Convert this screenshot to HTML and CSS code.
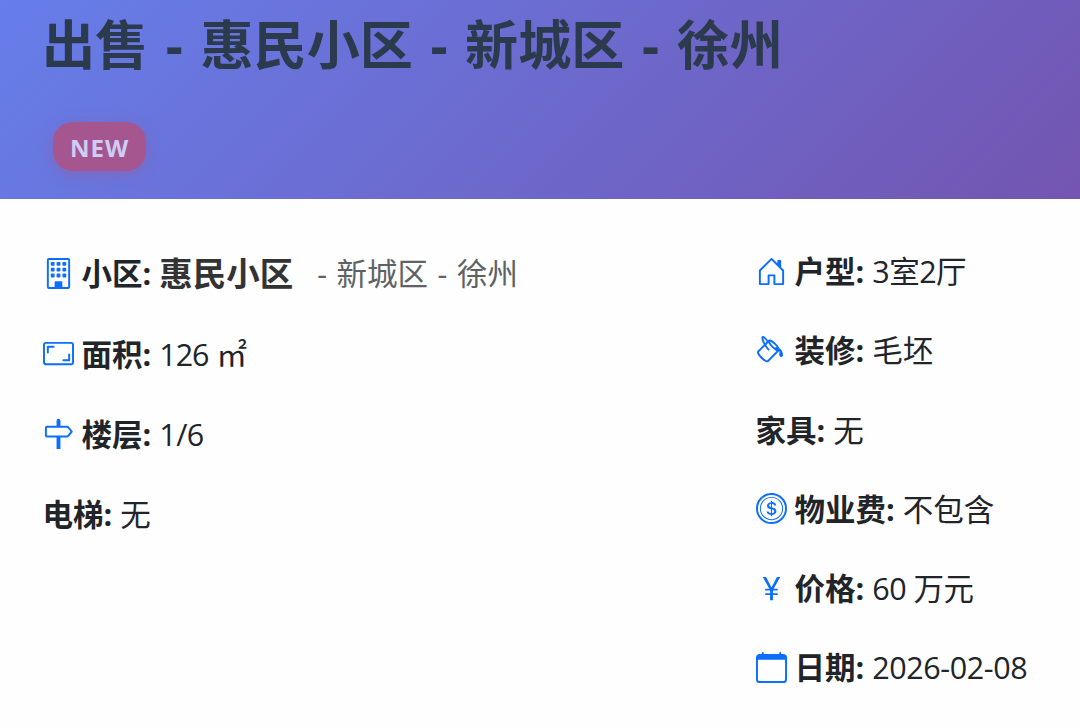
FILE: index.html
```
<!DOCTYPE html>
<html lang="zh-CN">
<head>
    <meta charset="UTF-8">
    <title>出售 - 惠民小区 - 新城区 - 徐州</title>
    <link rel="stylesheet" href="styles.css">
</head>
<body>
    <div class="card-header">
        <h1 class="title">出售 - 惠民小区 - 新城区 - 徐州</h1>
        <span class="badge-new">NEW</span>
    </div>

    <div class="card-body">
        <div class="col col-left">
            <p class="item">
                <svg class="icon" viewBox="0 0 16 16"><path d="M4 2.5a.5.5 0 0 1 .5-.5h1a.5.5 0 0 1 .5.5v1a.5.5 0 0 1-.5.5h-1a.5.5 0 0 1-.5-.5zm3 0a.5.5 0 0 1 .5-.5h1a.5.5 0 0 1 .5.5v1a.5.5 0 0 1-.5.5h-1a.5.5 0 0 1-.5-.5zm3 0a.5.5 0 0 1 .5-.5h1a.5.5 0 0 1 .5.5v1a.5.5 0 0 1-.5.5h-1a.5.5 0 0 1-.5-.5zm-6 3a.5.5 0 0 1 .5-.5h1a.5.5 0 0 1 .5.5v1a.5.5 0 0 1-.5.5h-1a.5.5 0 0 1-.5-.5zm3 0a.5.5 0 0 1 .5-.5h1a.5.5 0 0 1 .5.5v1a.5.5 0 0 1-.5.5h-1a.5.5 0 0 1-.5-.5zm3 0a.5.5 0 0 1 .5-.5h1a.5.5 0 0 1 .5.5v1a.5.5 0 0 1-.5.5h-1a.5.5 0 0 1-.5-.5zm-6 3a.5.5 0 0 1 .5-.5h1a.5.5 0 0 1 .5.5v1a.5.5 0 0 1-.5.5h-1a.5.5 0 0 1-.5-.5zm3 0a.5.5 0 0 1 .5-.5h1a.5.5 0 0 1 .5.5v1a.5.5 0 0 1-.5.5h-1a.5.5 0 0 1-.5-.5zm3 0a.5.5 0 0 1 .5-.5h1a.5.5 0 0 1 .5.5v1a.5.5 0 0 1-.5.5h-1a.5.5 0 0 1-.5-.5z"/><path d="M2 1a1 1 0 0 1 1-1h10a1 1 0 0 1 1 1v14a1 1 0 0 1-1 1H3a1 1 0 0 1-1-1zm11 0H3v14h3v-2.5a.5.5 0 0 1 .5-.5h3a.5.5 0 0 1 .5.5V15h3z"/></svg>
                <strong>小区:</strong>
                <span class="community">惠民小区</span>
                <span class="muted">- 新城区 - 徐州</span>
            </p>
            <p class="item">
                <svg class="icon" viewBox="0 0 16 16"><path d="M0 3.5A1.5 1.5 0 0 1 1.5 2h13A1.5 1.5 0 0 1 16 3.5v9a1.5 1.5 0 0 1-1.5 1.5h-13A1.5 1.5 0 0 1 0 12.5zM1.5 3a.5.5 0 0 0-.5.5v9a.5.5 0 0 0 .5.5h13a.5.5 0 0 0 .5-.5v-9a.5.5 0 0 0-.5-.5z"/><path d="M2 4.5a.5.5 0 0 1 .5-.5h3a.5.5 0 0 1 0 1H3v2.5a.5.5 0 0 1-1 0zm12 7a.5.5 0 0 1-.5.5h-3a.5.5 0 0 1 0-1H13V8.5a.5.5 0 0 1 1 0z"/></svg>
                <strong>面积:</strong>
                <span class="area">126 ㎡</span>
            </p>
            <p class="item">
                <svg class="icon" viewBox="0 0 16 16"><path d="M7 1.414V4H2a1 1 0 0 0-1 1v4a1 1 0 0 0 1 1h5v6h2v-6h3.532a1 1 0 0 0 .768-.36l1.933-2.32a.5.5 0 0 0 0-.64L13.3 4.36a1 1 0 0 0-.768-.36H9V1.414a1 1 0 0 0-2 0M12.532 5l1.666 2-1.666 2H2V5z"/></svg>
                <strong>楼层:</strong>
                <span class="floor">1/6</span>
            </p>
            <p class="item">
                <strong>电梯:</strong>
                <span>无</span>
            </p>
        </div>

        <div class="col col-right">
            <p class="item">
                <svg class="icon" viewBox="0 0 16 16"><path d="M8.354 1.146a.5.5 0 0 0-.708 0l-6 6A.5.5 0 0 0 1.5 7.5v7a.5.5 0 0 0 .5.5h4.5a.5.5 0 0 0 .5-.5v-4h2v4a.5.5 0 0 0 .5.5H14a.5.5 0 0 0 .5-.5v-7a.5.5 0 0 0-.146-.354L13 5.793V2.5a.5.5 0 0 0-.5-.5h-1a.5.5 0 0 0-.5.5v1.293zM2.5 14V7.707l5.5-5.5 5.5 5.5V14H10v-4a.5.5 0 0 0-.5-.5h-3a.5.5 0 0 0-.5.5v4z"/></svg>
                <strong>户型:</strong>
                <span class="rooms">3室2厅</span>
            </p>
            <p class="item">
                <svg class="icon" viewBox="0 0 16 16"><path d="M6.192 2.78c-.458-.677-.927-1.248-1.35-1.643a3 3 0 0 0-.71-.515c-.217-.104-.56-.205-.882-.02-.367.213-.427.63-.43.896-.003.304.064.664.173 1.044.196.687.556 1.528 1.035 2.402L.752 8.22c-.277.277-.269.656-.218.918.055.283.187.593.36.903.348.627.92 1.361 1.626 2.068.707.707 1.441 1.278 2.068 1.626.31.173.62.305.903.36.262.05.64.059.918-.218l5.615-5.615c.118.257.092.512.05.939-.03.292-.068.665-.073 1.176v.123h.003a1 1 0 0 0 1.993 0H14v-.057a1 1 0 0 0-.004-.117c-.055-1.25-.7-2.738-1.86-3.494a4 4 0 0 0-.211-.434c-.349-.626-.92-1.36-1.627-2.067S8.857 3.052 8.23 2.704c-.31-.172-.62-.304-.903-.36-.262-.05-.64-.058-.918.219zM4.16 1.867c.381.356.844.922 1.311 1.632l-.704.705c-.382-.727-.66-1.402-.813-1.938a3.3 3.3 0 0 1-.131-.673q.137.09.337.274m.394 3.965c.54.852 1.107 1.567 1.607 2.033a.5.5 0 1 0 .682-.732c-.453-.422-1.017-1.136-1.564-2.027l1.088-1.088q.081.181.183.365c.349.627.92 1.361 1.627 2.068.706.707 1.44 1.278 2.068 1.626q.183.103.365.183l-4.861 4.862-.068-.01c-.137-.027-.342-.104-.608-.252-.524-.292-1.186-.8-1.846-1.46s-1.168-1.32-1.46-1.846c-.147-.265-.225-.47-.251-.607l-.01-.068zm2.87-1.935a2.4 2.4 0 0 1-.241-.561c.135.033.324.11.562.241.524.292 1.186.8 1.846 1.46.45.45.83.901 1.118 1.31a3.5 3.5 0 0 0-1.066.091 11 11 0 0 1-.76-.694c-.66-.66-1.167-1.322-1.458-1.847z"/></svg>
                <strong>装修:</strong>
                <span>毛坯</span>
            </p>
            <p class="item">
                <strong>家具:</strong>
                <span>无</span>
            </p>
            <p class="item">
                <svg class="icon" viewBox="0 0 16 16"><path d="M5.5 9.511c.076.954.83 1.697 2.182 1.785V12h.6v-.709c1.4-.098 2.218-.846 2.218-1.932 0-.987-.626-1.496-1.745-1.76l-.473-.112V5.57c.6.068.982.396 1.074.85h1.052c-.076-.919-.864-1.638-2.126-1.716V4h-.6v.719c-1.195.117-2.01.836-2.01 1.853 0 .9.606 1.472 1.613 1.707l.397.098v2.034c-.615-.093-1.022-.43-1.114-.9zm2.177-2.166c-.59-.137-.91-.416-.91-.836 0-.47.345-.822.915-.925v1.76h-.005zm.692 1.193c.717.166 1.048.435 1.048.91 0 .542-.412.914-1.135.982V8.518z"/><path d="M8 15A7 7 0 1 1 8 1a7 7 0 0 1 0 14m0 1A8 8 0 1 0 8 0a8 8 0 0 0 0 16"/><path d="M8 13.5a5.5 5.5 0 1 1 0-11 5.5 5.5 0 0 1 0 11m0 .5A6 6 0 1 0 8 2a6 6 0 0 0 0 12"/></svg>
                <strong>物业费:</strong>
                <span>不包含</span>
            </p>
            <p class="item">
                <svg class="icon" viewBox="0 0 16 16"><path d="M8.75 14v-2.629h2.446v-.967H8.75v-1.31h2.445v-.967H9.128L12.5 2h-1.699L8.047 7.327h-.086L5.207 2H3.5l3.363 6.127H4.778v.968H7.25v1.31H4.78v.966h2.47V14z"/></svg>
                <strong>价格:</strong>
                <span class="price">60 万元</span>
            </p>
            <p class="item">
                <svg class="icon" viewBox="0 0 16 16"><path d="M3.5 0a.5.5 0 0 1 .5.5V1h8V.5a.5.5 0 0 1 1 0V1h1a2 2 0 0 1 2 2v11a2 2 0 0 1-2 2H2a2 2 0 0 1-2-2V3a2 2 0 0 1 2-2h1V.5a.5.5 0 0 1 .5-.5M1 4v10a1 1 0 0 0 1 1h12a1 1 0 0 0 1-1V4z"/></svg>
                <strong>日期:</strong>
                <span class="date">2026-02-08</span>
            </p>
        </div>
    </div>
</body>
</html>
```
FILE: styles.css
```
* {
    box-sizing: border-box;
}
body {
    margin: 0;
    height: 728px;
    overflow: hidden;
    background: #fefefe;
    color: #212529;
    font-family: "Open Sans", "Noto Sans CJK SC", sans-serif;
    font-size: 30.5px;
}
.card-header {
    height: 199px;
    padding: 13px 43px 0 42px;
    background: linear-gradient(135deg, #667eea 0%, #764ba2 125%);
}
.title {
    margin: 0 0 45px;
    font-size: 53.1px;
    line-height: 64px;
    font-weight: 700;
    word-spacing: 3.8px;
    white-space: nowrap;
    color: #2c3a4d;
}
.badge-new {
    display: block;
    width: 93px;
    height: 49px;
    margin-left: 11px;
    border-radius: 20px;
    background: #a5568f;
    box-shadow: 0 3px 14px rgba(165, 86, 143, 0.45);
    color: #cdcdf5;
    font-size: 24px;
    font-weight: 700;
    line-height: 52px;
    letter-spacing: 1px;
    text-align: center;
}
.card-body {
    display: grid;
    grid-template-columns: 713px 1fr;
    padding-left: 42.5px;
}
.col {
    display: flex;
    flex-direction: column;
}
.col-left {
    padding-top: 50.4px;
    gap: 32.2px;
}
.col-right {
    padding-top: 48px;
    gap: 31.3px;
}
.item {
    display: flex;
    align-items: center;
    gap: 8px;
    height: 48px;
    margin: 0;
    line-height: 48px;
    white-space: nowrap;
}
.item strong {
    font-weight: 700;
}
.icon {
    flex: none;
    width: 31px;
    height: 31px;
    fill: #0d6efd;
}
.community {
    font-size: 33.5px;
    font-weight: 700;
    color: #333;
}
.muted {
    margin-left: 16px;
    word-spacing: 1.6px;
    color: #5f6265;
}
.area {
    letter-spacing: -1px;
    word-spacing: 1px;
}
.floor,
.rooms,
.price {
    letter-spacing: -0.5px;
}
.date {
    letter-spacing: -0.4px;
}
```
